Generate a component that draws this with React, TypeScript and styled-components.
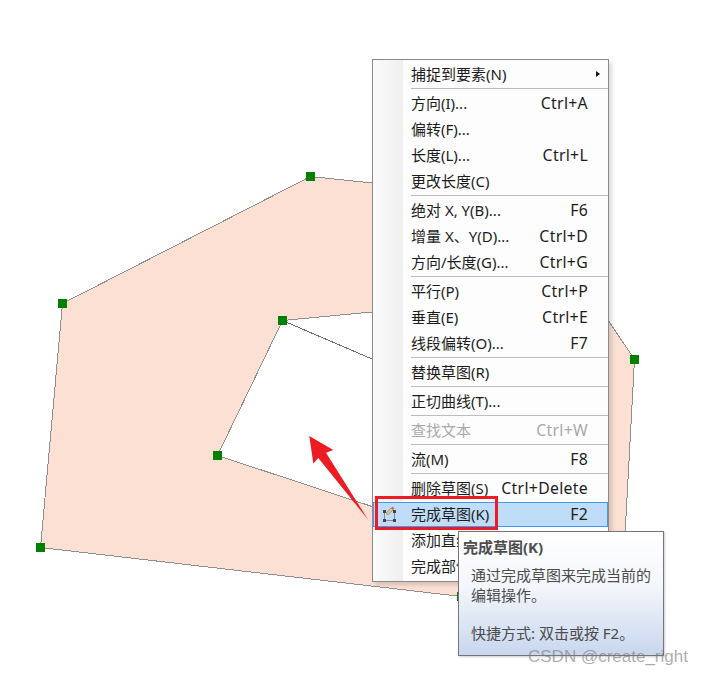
import React from "react";
import styled, { createGlobalStyle } from "styled-components";

const Global = createGlobalStyle`
  html, body { margin: 0; padding: 0; background: #fff; }
  #root { width: 703px; height: 675px; overflow: hidden; }
`;

const FONT = `"Noto Sans", "Noto Sans CJK SC", sans-serif`;

const Scene = styled.div`
  position: relative;
  width: 703px;
  height: 675px;
  background: #fff;
  overflow: hidden;
  font-family: ${FONT};
`;

const Drawing = styled.svg`
  position: absolute;
  inset: 0;
`;

const Menu = styled.div`
  position: absolute;
  left: 372px;
  top: 59px;
  width: 237px;
  box-sizing: border-box;
  padding: 2px 0 1px;
  display: flex;
  flex-direction: column;
  background: linear-gradient(to right, #fbfbfb 0, #efefef 30px, #fdfdfd 30px);
  border: 1px solid #8a8a8a;
  box-shadow: 3px 3px 4px rgba(0, 0, 0, 0.14);
`;

const Row = styled.div<{ $active?: boolean; $disabled?: boolean }>`
  position: relative;
  height: ${(p) => (p.$active ? "25px" : "26px")};
  margin-bottom: ${(p) => (p.$active ? "1px" : "0")};
  box-sizing: border-box;
  display: flex;
  align-items: center;
  justify-content: space-between;
  padding: 0 20px ${(p) => (p.$active ? "2px" : "3px")} 38px;
  font-size: 15px;
  color: ${(p) => (p.$disabled ? "#a9a9a9" : "#1c1c1c")};
  background: ${(p) => (p.$active ? "#bfdcf9" : "transparent")};
  outline: ${(p) => (p.$active ? "1px solid #3f9bef" : "none")};
  outline-offset: -1px;
  white-space: nowrap;
`;

const Label = styled.span``;

const Shortcut = styled.span`
  font-size: 15.8px;
  letter-spacing: 0.3px;
`;

const Separator = styled.div`
  height: 3px;
  margin-left: 38px;
  border-top: 1px solid #bdbdbd;
  box-sizing: border-box;
`;

const SubArrow = styled.span`
  position: absolute;
  right: 8px;
  top: 9px;
  width: 0;
  height: 0;
  border-left: 4px solid #111;
  border-top: 3.5px solid transparent;
  border-bottom: 3.5px solid transparent;
`;

const RowIcon = styled.svg`
  position: absolute;
  left: 8px;
  top: 3px;
`;

const Highlight = styled.div`
  position: absolute;
  left: 375px;
  top: 496px;
  width: 123px;
  height: 34px;
  box-sizing: border-box;
  border: 3px solid #ed1c24;
`;

const Tooltip = styled.div`
  position: absolute;
  left: 458px;
  top: 531px;
  width: 206px;
  height: 125px;
  box-sizing: border-box;
  padding: 5px 4px;
  border: 1px solid #767676;
  background: linear-gradient(to bottom, #ffffff 0%, #f3f6fb 45%, #c8d7ee 100%);
  color: #4c4c4c;
  box-shadow: 1px 1px 2px rgba(0, 0, 0, 0.2);
`;

const TipTitle = styled.div`
  font-size: 15px;
  font-weight: 700;
  line-height: 20px;
  margin-bottom: 9px;
`;

const TipBody = styled.div`
  font-size: 15px;
  line-height: 19.5px;
  padding-left: 8px;
`;

const TipGap = styled.div`
  height: 19px;
`;

const Watermark = styled.div`
  position: absolute;
  left: 528px;
  top: 646px;
  font-size: 17px;
  line-height: 22px;
  color: rgba(120, 120, 120, 0.62);
  font-family: "Liberation Sans", sans-serif;
  white-space: nowrap;
`;

type Item =
  | { sep: true }
  | { label: string; key?: string; sub?: boolean; disabled?: boolean; active?: boolean };

const items: Item[] = [
  { label: "捕捉到要素(N)", sub: true },
  { sep: true },
  { label: "方向(I)...", key: "Ctrl+A" },
  { label: "偏转(F)..." },
  { label: "长度(L)...", key: "Ctrl+L" },
  { label: "更改长度(C)" },
  { sep: true },
  { label: "绝对 X, Y(B)...", key: "F6" },
  { label: "增量 X、Y(D)...", key: "Ctrl+D" },
  { label: "方向/长度(G)...", key: "Ctrl+G" },
  { sep: true },
  { label: "平行(P)", key: "Ctrl+P" },
  { label: "垂直(E)", key: "Ctrl+E" },
  { label: "线段偏转(O)...", key: "F7" },
  { sep: true },
  { label: "替换草图(R)" },
  { sep: true },
  { label: "正切曲线(T)..." },
  { sep: true },
  { label: "查找文本", key: "Ctrl+W", disabled: true },
  { sep: true },
  { label: "流(M)", key: "F8" },
  { sep: true },
  { label: "删除草图(S)", key: "Ctrl+Delete" },
  { label: "完成草图(K)", key: "F2", active: true },
  { label: "添加直线(A)" },
  { label: "完成部件(P)" },
];

const handles: [number, number][] = [
  [58, 299],
  [306, 172],
  [630, 355],
  [36, 543],
  [278, 316],
  [213, 451],
  [457, 592],
];

const FinishIcon = () => (
  <RowIcon width="22" height="20" viewBox="0 0 22 20">
    <path d="M3.5 6 L3.5 15.5 L13.5 15.5 L13.5 6" fill="none" stroke="#8a8a8a" strokeWidth="1" />
    <rect x="2" y="5" width="3" height="3" fill="#444" />
    <rect x="2" y="14" width="3" height="3" fill="#444" />
    <rect x="12" y="14" width="3" height="3" fill="#444" />
    <rect x="12" y="5" width="3" height="3" fill="#444" />
    <path d="M5 8 L10 3 L12 5 L7 10 Z" fill="#d9c48a" stroke="#8f7f55" strokeWidth="0.6" />
    <path d="M10 3 L11.5 1.5 L13.5 3.5 L12 5 Z" fill="#d9606c" />
  </RowIcon>
);

export default function App() {
  return (
    <Scene>
      <Global />
      <Drawing width="703" height="675" viewBox="0 0 703 675">
        <path
          fillRule="evenodd"
          fill="#fbe0d3"
          stroke="#8f8f8f"
          strokeWidth="1"
          shapeRendering="crispEdges"
          d="M62.5 303.5 L310.5 176.5 L372 183 L608 320 L634.5 359.5 L625 535 L600 600 L461.5 596.5 L40.5 547.5 Z
             M282.5 320.5 L372 312 L500 340 L500 540 L372 506.5 L217.5 455.5 Z"
        />
        <line
          x1="282.5"
          y1="320.5"
          x2="372"
          y2="359"
          stroke="#6f6f6f"
          strokeWidth="1"
          shapeRendering="crispEdges"
        />
        {handles.map(([x, y]) => (
          <rect key={`${x}-${y}`} x={x} y={y} width="9" height="9" fill="#008000" />
        ))}
        <path
          d="M309.3 436 L333.3 450 L326 452.7 L368.3 520 L318.3 458 L313.3 463.5 Z"
          fill="#ed1c24"
        />
      </Drawing>
      <Menu>
        {items.map((it, i) =>
          "sep" in it ? (
            <Separator key={i} />
          ) : (
            <Row key={i} $active={it.active} $disabled={it.disabled}>
              {it.active && <FinishIcon />}
              <Label>{it.label}</Label>
              {it.key && <Shortcut>{it.key}</Shortcut>}
              {it.sub && <SubArrow />}
            </Row>
          )
        )}
      </Menu>
      <Highlight />
      <Tooltip>
        <TipTitle>完成草图(K)</TipTitle>
        <TipBody>
          通过完成草图来完成当前的
          <br />
          编辑操作。
          <TipGap />
          快捷方式: 双击或按 F2。
        </TipBody>
      </Tooltip>
      <Watermark>CSDN @create_right</Watermark>
    </Scene>
  );
}
